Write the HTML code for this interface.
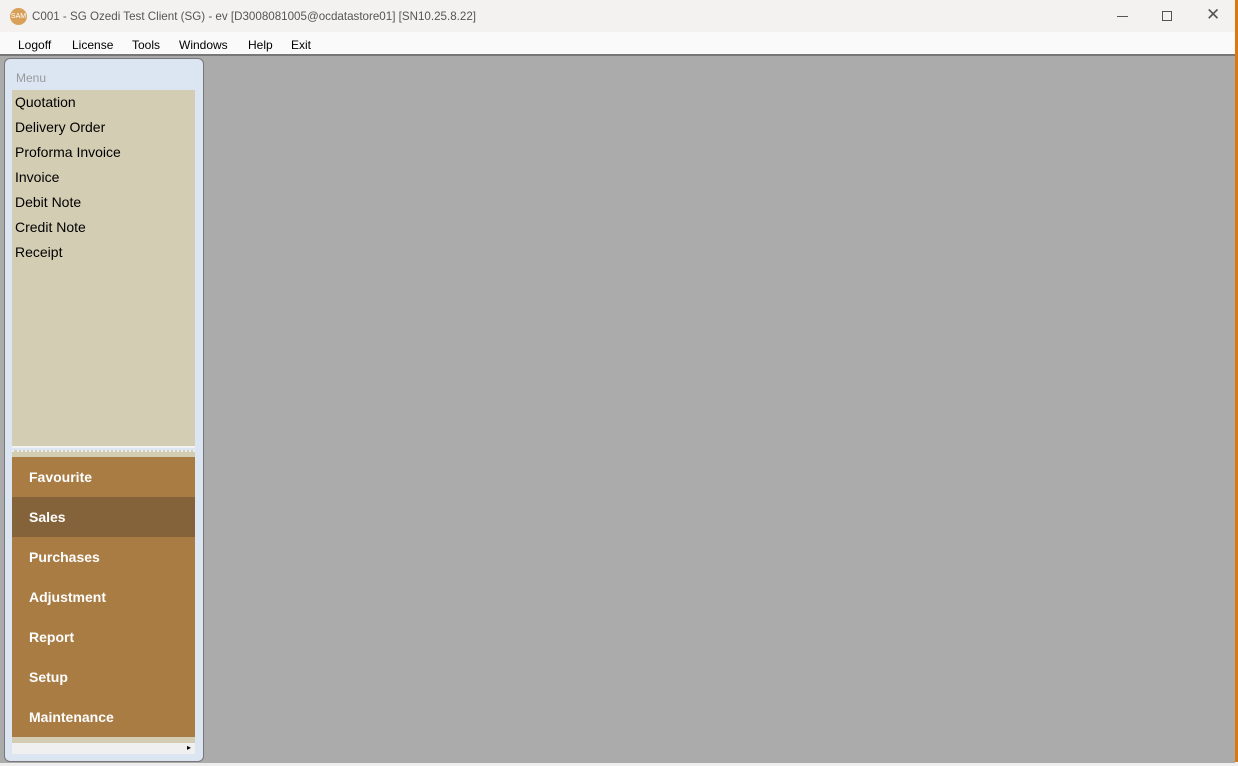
<!DOCTYPE html>
<html><head><style>
*{margin:0;padding:0;box-sizing:border-box}
body{width:1238px;height:766px;overflow:hidden;background:#ababab;font-family:"Liberation Sans",sans-serif;position:relative}
.title{position:absolute;left:0;top:0;width:1235px;height:32px;background:#f3f2f1;font-size:11.6px;color:#555}
.menu{position:absolute;left:0;top:32px;width:1235px;height:24px;background:#fafafa;border-bottom:2px solid #777;font-size:12px;color:#000}
.menu span{position:absolute;top:6px}
.panel{position:absolute;left:4px;top:58px;width:200px;height:704px;background:#dce6f2;border:1px solid #777;border-radius:6px}
.list{position:absolute;left:7px;top:31px;width:183px;height:358px;background:#d3cdb3;border-bottom:2px solid #f2f2f2}
.list div{font-size:14px;height:25px;padding:4px 0 0 3px;color:#000}
.btn{position:absolute;left:7px;width:183px;height:40px;background:#a87c43;color:#fff;font-weight:bold;font-size:14px;padding:12px 0 0 17px}
</style></head><body>
<div style="position:absolute;left:0;top:0;width:1238px;height:766px;background:#d87a10"></div>
<div style="position:absolute;left:0;top:762px;width:1238px;height:4px;background:#eee"></div>
<div style="position:absolute;left:0;top:32px;width:1235px;height:731px;background:#ababab"></div>
<div class="title">
<div style="position:absolute;left:10px;top:8px;width:17px;height:17px;border-radius:50%;background:#d9a05a;color:#fff;font-size:7px;line-height:17px;text-align:center">SAM</div>
<span style="position:absolute;left:32px;top:10px">C001 - SG Ozedi Test Client (SG) - ev [D3008081005@ocdatastore01] [SN10.25.8.22]</span>
<div style="position:absolute;left:1117px;top:16px;width:11px;height:1px;background:#555"></div>
<div style="position:absolute;left:1162px;top:11px;width:10px;height:10px;border:1px solid #555"></div>
<span style="position:absolute;left:1206px;top:5px;font-size:17px;color:#555">✕</span>
</div>
<div class="menu"><span style="left:18px">Logoff</span><span style="left:72px">License</span><span style="left:132px">Tools</span><span style="left:179px">Windows</span><span style="left:248px">Help</span><span style="left:291px">Exit</span></div>
<div class="panel">
<div style="position:absolute;left:11px;top:12px;font-size:12px;color:#999">Menu</div>
<div class="list"><div>Quotation</div><div>Delivery Order</div><div>Proforma Invoice</div><div>Invoice</div><div>Debit Note</div><div>Credit Note</div><div>Receipt</div></div>
<div style="position:absolute;left:7px;top:391px;width:183px;height:8px;background:#d3cdb3;border-top:2px dotted #eee"></div>
<div class="btn" style="top:398px">Favourite</div>
<div class="btn" style="top:438px;background:#85633a">Sales</div>
<div class="btn" style="top:478px">Purchases</div>
<div class="btn" style="top:518px">Adjustment</div>
<div class="btn" style="top:558px">Report</div>
<div class="btn" style="top:598px">Setup</div>
<div class="btn" style="top:638px">Maintenance</div>
<div style="position:absolute;left:7px;top:678px;width:183px;height:6px;background:#d3cdb3"></div>
<div style="position:absolute;left:7px;top:684px;width:183px;height:11px;background:#f0f0f0;font-size:8px;text-align:right;padding-right:4px">▸</div>
</div>
</body></html>
